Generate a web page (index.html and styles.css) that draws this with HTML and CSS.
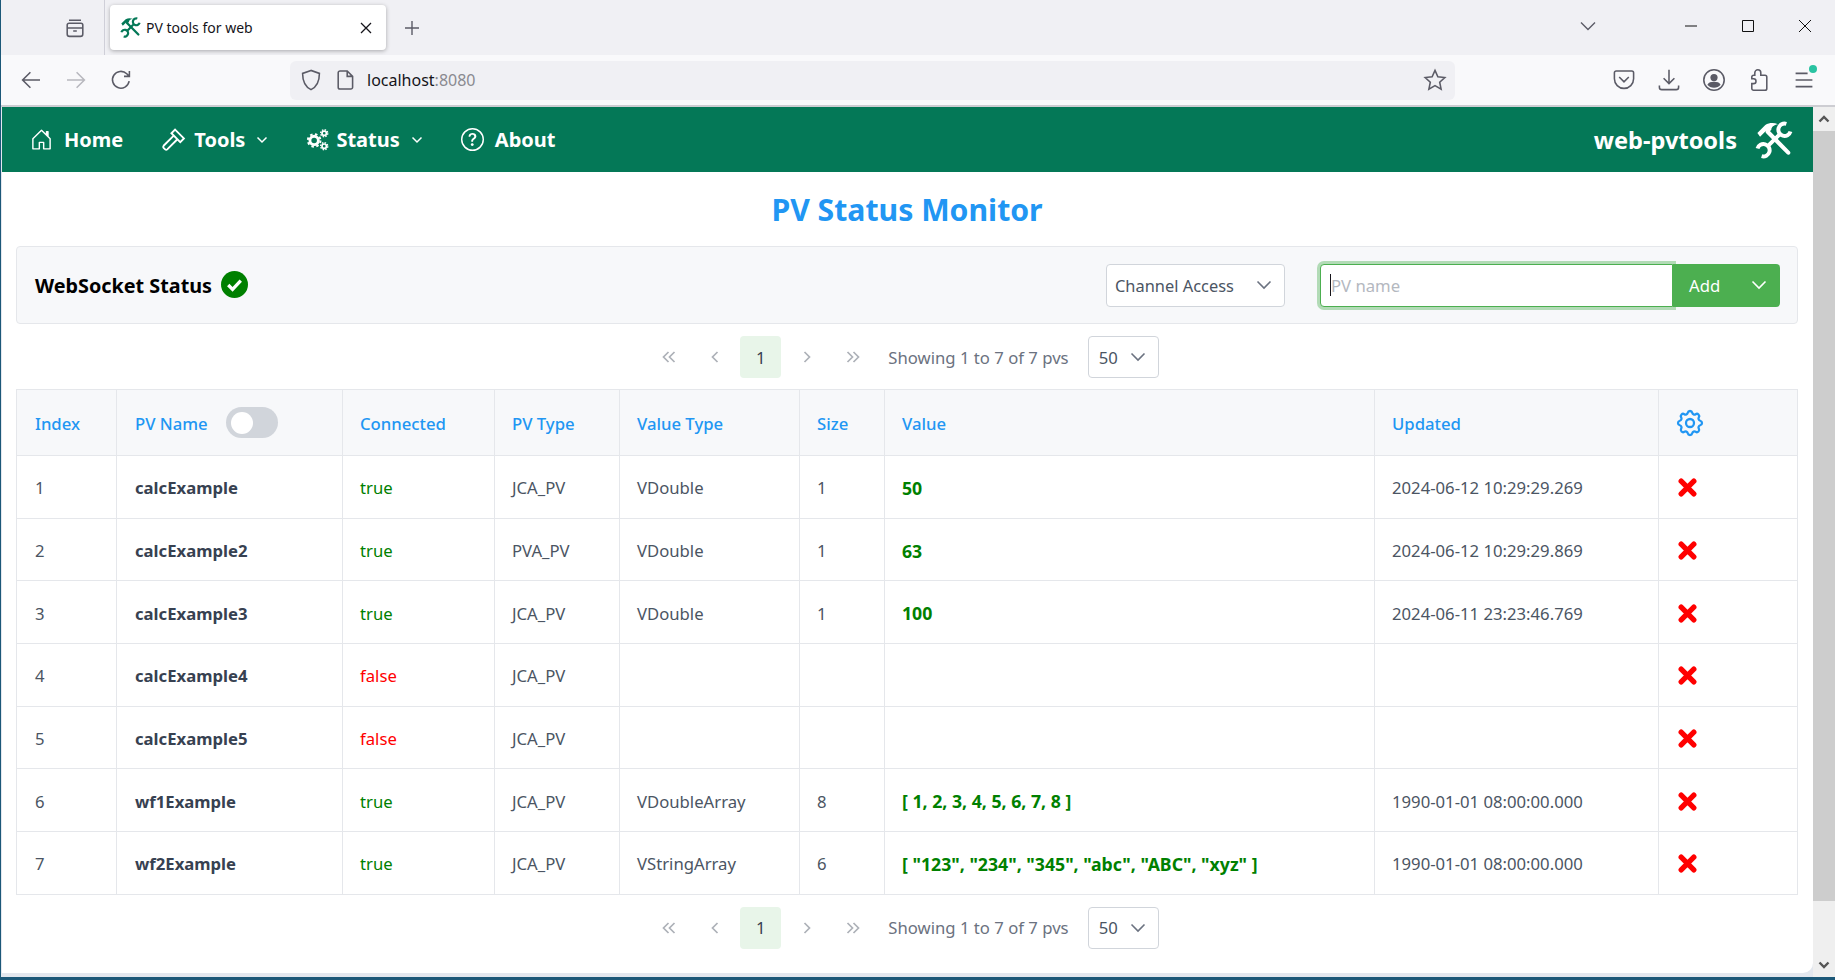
FILE: index.html
```html
<!DOCTYPE html>
<html lang="en">

<head>
    <meta charset="UTF-8">
    <title>PV tools for web</title>
    <link rel="stylesheet" href="styles.css">
</head>

<body>
    <svg class="defs" width="0" height="0">
        <symbol id="tools" viewBox="0 0 24 24">
            <path d="M1.500 7.500 6.500 2.500C9 1 12 1 14.500 2 11.800 2.500 10.300 3.800 10.300 5.500L8.400 7.600 7 6.200 3.200 10Z" fill="currentColor" />
            <path d="M8 6.800 21 20" stroke="currentColor" stroke-width="2.600" stroke-linecap="round" fill="none" />
            <path d="M19.800 1.800A3.900 3.900 0 1 0 22.400 6.600M15.600 8.400 8.400 15.600M4.200 22.200A3.900 3.900 0 1 0 1.600 17.400" stroke="currentColor" stroke-width="2.500" fill="none" />
        </symbol>
    </svg>

    <div class="tabbar">
        <div class="tab-side">
            <svg class="ff-icon" viewBox="0 0 20 20"><path d="M5 3.500h10M3.500 7.500a1.500 1.500 0 0 1 1.500-1.500h10a1.500 1.500 0 0 1 1.500 1.500v7.500a2 2 0 0 1-2 2h-9a2 2 0 0 1-2-2ZM3.500 10h13M8.500 12.500h3" /></svg>
        </div>
        <div class="tab">
            <svg class="tab-logo"><use href="#tools" /></svg>
            <span class="tab-title">PV tools for web</span>
            <svg class="tab-close" viewBox="0 0 12 12"><path d="M1 1l10 10M11 1 1 11" /></svg>
        </div>
        <svg class="tab-new" viewBox="0 0 16 16"><path d="M8 1v14M1 8h14" /></svg>
        <div class="win-controls">
            <svg class="tab-list" viewBox="0 0 16 10"><path d="M1 1.500 8 8.500l7-7" /></svg>
            <svg class="win-btn win-min" viewBox="0 0 12 12"><path d="M0 6h12" /></svg>
            <svg class="win-btn win-max" viewBox="0 0 12 12"><path d="M.5.500h11v11H.5Z" /></svg>
            <svg class="win-btn win-close" viewBox="0 0 12 12"><path d="M0 0l12 12M12 0 0 12" /></svg>
        </div>
    </div>

    <div class="toolbar">
        <div class="toolbar-nav">
            <svg class="ff-icon" viewBox="0 0 20 20"><path d="M17.500 10H3M9.500 3.500 3 10l6.500 6.500" /></svg>
            <svg class="ff-icon muted" viewBox="0 0 20 20"><path d="M2.500 10H17M10.500 3.500 17 10l-6.500 6.500" /></svg>
            <svg class="ff-icon" viewBox="0 0 20 20"><path d="M16.800 11a7 7 0 1 1-2-6.200L17 7M17 2.500V7h-4.500" /></svg>
        </div>
        <div class="urlbar">
            <svg class="ff-icon" viewBox="0 0 20 20"><path d="M10 2 3 4.500c0 6.500 2 11 7 13.500 5-2.500 7-7 7-13.500Z" /></svg>
            <svg class="ff-icon page-icon" viewBox="0 0 20 20"><path d="M5 2.500h6l4.500 4.500v9a1.500 1.500 0 0 1-1.500 1.500H5A1.500 1.500 0 0 1 3.500 16V4A1.500 1.500 0 0 1 5 2.500ZM11 2.500V7h4.500" /></svg>
            <span class="url-text">localhost<span class="url-port">:8080</span></span>
            <svg class="ff-icon star-icon" viewBox="0 0 20 20"><path d="M10 2l2.400 5.300 5.800.7-4.300 3.900 1.200 5.700L10 14.700l-5.100 2.900 1.200-5.700L1.800 8l5.800-.7Z" /></svg>
        </div>
        <div class="toolbar-right">
            <svg class="ff-icon" viewBox="0 0 20 20"><path d="M3.500 2.500h13A1.500 1.500 0 0 1 18 4v5a8 8 0 0 1-16 0V4a1.500 1.500 0 0 1 1.500-1.500ZM6 7.500l4 4 4-4" /></svg>
            <svg class="ff-icon" viewBox="0 0 20 20"><path d="M10 1.500v11.500M5.500 8.500 10 13l4.500-4.500M2 14.500v1.500a2 2 0 0 0 2 2h12a2 2 0 0 0 2-2v-1.500" /></svg>
            <svg class="ff-icon" viewBox="0 0 20 20"><circle cx="10" cy="10" r="8.500" /><circle class="solid" cx="10" cy="8" r="3" /><path class="solid" d="M4.500 14c1-2 3-2.500 5.500-2.500s4.500.5 5.500 2.500c-1.200 1.500-3.300 2.500-5.500 2.500S5.700 15.500 4.500 14Z" /></svg>
            <svg class="ff-icon" viewBox="0 0 20 20"><path d="M9 1.500a2.500 2.500 0 0 1 2.500 2.500v2H15a1.500 1.500 0 0 1 1.500 1.500V17a1.500 1.500 0 0 1-1.500 1.500H5.500A1.500 1.500 0 0 1 4 17v-4h1.500a2 2 0 0 0 0-4H4V7.500A1.500 1.500 0 0 1 5.500 6h1V4A2.500 2.500 0 0 1 9 1.500Z" /></svg>
            <div class="menu-btn">
                <svg class="ff-icon" viewBox="0 0 20 20"><path d="M3 4.500h10M3 10h14M3 15.500h14" /></svg>
                <span class="menu-dot"></span>
            </div>
        </div>
    </div>

    <div class="viewport">
        <div class="page">
            <nav class="navbar">
                <a class="nav-item">
                    <svg class="nav-icon" viewBox="0 0 16 16"><path d="M8.354 1.146a.5.5 0 0 0-.708 0l-6 6A.5.5 0 0 0 1.5 7.5v7a.5.5 0 0 0 .5.5h4.500a.5.5 0 0 0 .5-.5v-4h2v4a.5.5 0 0 0 .5.5H14a.5.5 0 0 0 .5-.5v-7a.5.5 0 0 0-.146-.354L13 5.793V2.500a.5.5 0 0 0-.5-.5h-1a.5.5 0 0 0-.5.5v1.293L8.354 1.146zM2.500 14V7.707l5.500-5.500 5.500 5.500V14H10v-4a.5.5 0 0 0-.5-.5h-3a.5.5 0 0 0-.5.5v4H2.500z" /></svg>
                    Home
                </a>
                <a class="nav-item">
                    <svg class="nav-icon hammer" viewBox="0 0 24 24"><path class="line-icon" d="M13.500 2.500 22 11l-3.500 3.500L10 6ZM12 8.500 2.500 18a1.500 1.500 0 0 0 0 2l1.500 1.500a1.500 1.500 0 0 0 2 0l9.500-9.500" /></svg>
                    Tools
                    <svg class="nav-caret" viewBox="0 0 12 8"><path d="M1.500 1.500 6 6l4.500-4.500" /></svg>
                </a>
                <a class="nav-item">
                    <svg class="nav-icon gears" viewBox="0 0 24 24"><circle class="gear" cx="8.500" cy="13" r="4.400" /><circle class="gear-teeth" cx="8.500" cy="13" r="6.600" /><circle class="gear small" cx="19" cy="5.500" r="2.300" /><circle class="gear-teeth small" cx="19" cy="5.500" r="3.700" /><circle class="gear small" cx="19" cy="19" r="2.300" /><circle class="gear-teeth small" cx="19" cy="19" r="3.700" /></svg>
                    Status
                    <svg class="nav-caret" viewBox="0 0 12 8"><path d="M1.500 1.500 6 6l4.500-4.500" /></svg>
                </a>
                <a class="nav-item">
                    <svg class="nav-icon" viewBox="0 0 16 16"><path d="M8 15A7 7 0 1 1 8 1a7 7 0 0 1 0 14zm0 1A8 8 0 1 0 8 0a8 8 0 0 0 0 16z" /><path d="M5.255 5.786a.237.237 0 0 0 .241.247h.825c.138 0 .248-.113.266-.25.09-.656.54-1.134 1.342-1.134.686 0 1.314.343 1.314 1.168 0 .635-.374.927-.965 1.371-.673.489-1.206 1.06-1.168 1.987l.003.217a.25.25 0 0 0 .25.246h.811a.25.25 0 0 0 .25-.25v-.105c0-.718.273-.927 1.01-1.486.609-.463 1.244-.977 1.244-2.056 0-1.511-1.276-2.241-2.673-2.241-1.267 0-2.655.59-2.75 2.286zm1.557 5.763c0 .533.425.927 1.01.927.609 0 1.028-.394 1.028-.927 0-.552-.42-.94-1.029-.94-.584 0-1.009.388-1.009.94z" /></svg>
                    About
                </a>
                <div class="brand">
                    <span>web-pvtools</span>
                    <svg class="brand-logo"><use href="#tools" /></svg>
                </div>
            </nav>

            <main class="content">
                <h1 class="page-title">PV Status Monitor</h1>

                <div class="status-panel">
                    <div class="ws-status">
                        <span>WebSocket Status</span>
                        <svg class="ws-check" viewBox="0 0 28 28"><circle cx="14" cy="14" r="14" /><path d="M7.500 14.500 12 19l8.500-9" /></svg>
                    </div>
                    <div class="pv-form">
                        <div class="select protocol-select">
                            <span>Channel Access</span>
                            <svg class="select-caret" viewBox="0 0 16 10"><path d="M1.500 1.500 8 8l6.500-6.500" /></svg>
                        </div>
                        <div class="add-group">
                            <div class="pv-input"><span class="caret-bar"></span>PV name</div>
                            <div class="add-btn">
                                <span>Add</span>
                                <svg viewBox="0 0 16 10"><path d="M1.500 1.500 8 8l6.500-6.500" /></svg>
                            </div>
                        </div>
                    </div>
                </div>

                <div class="pager">
                    <span class="page-btn"><svg viewBox="0 0 16 12"><path d="M7.500 1 2.500 6l5 5M13.500 1l-5 5 5 5" /></svg></span>
                    <span class="page-btn"><svg viewBox="0 0 16 12"><path d="M10.500 1l-5 5 5 5" /></svg></span>
                    <span class="page-btn active">1</span>
                    <span class="page-btn"><svg viewBox="0 0 16 12"><path d="M5.500 1l5 5-5 5" /></svg></span>
                    <span class="page-btn"><svg viewBox="0 0 16 12"><path d="M2.500 1l5 5-5 5M8.500 1l5 5-5 5" /></svg></span>
                    <span class="page-info">Showing 1 to 7 of 7 pvs</span>
                    <div class="select size-select">
                        <span>50</span>
                        <svg class="select-caret" viewBox="0 0 16 10"><path d="M1.500 1.500 8 8l6.500-6.500" /></svg>
                    </div>
                </div>

                <table class="pv-table">
                    <colgroup>
                        <col class="col-index">
                        <col class="col-name">
                        <col class="col-conn">
                        <col class="col-type">
                        <col class="col-vtype">
                        <col class="col-size">
                        <col class="col-value">
                        <col class="col-updated">
                        <col class="col-action">
                    </colgroup>
                    <thead>
                        <tr>
                            <th>Index</th>
                            <th>
                                <div class="name-head">PV Name <span class="toggle"><span class="toggle-knob"></span></span></div>
                            </th>
                            <th>Connected</th>
                            <th>PV Type</th>
                            <th>Value Type</th>
                            <th>Size</th>
                            <th>Value</th>
                            <th>Updated</th>
                            <th>
                                <svg class="settings-icon" viewBox="0 0 24 24"><path d="M10.325 4.317c.426-1.756 2.924-1.756 3.35 0a1.724 1.724 0 002.573 1.066c1.543-.94 3.31.826 2.37 2.37a1.724 1.724 0 001.065 2.572c1.756.426 1.756 2.924 0 3.35a1.724 1.724 0 00-1.066 2.573c.94 1.543-.826 3.31-2.37 2.37a1.724 1.724 0 00-2.572 1.065c-.426 1.756-2.924 1.756-3.35 0a1.724 1.724 0 00-2.573-1.066c-1.543.94-3.31-.826-2.37-2.37a1.724 1.724 0 00-1.065-2.572c-1.756-.426-1.756-2.924 0-3.35a1.724 1.724 0 001.066-2.573c-.94-1.543.826-3.31 2.37-2.37.996.608 2.296.07 2.572-1.065z" /><path d="M15 12a3 3 0 11-6 0 3 3 0 016 0z" /></svg>
                            </th>
                        </tr>
                    </thead>
                    <tbody>
                        <tr>
                            <td>1</td>
                            <td class="pv-name">calcExample</td>
                            <td class="ok">true</td>
                            <td>JCA_PV</td>
                            <td>VDouble</td>
                            <td>1</td>
                            <td class="pv-value">50</td>
                            <td>2024-06-12 10:29:29.269</td>
                            <td><svg class="del-icon" viewBox="0 0 18 18"><path d="M3 3l12 12M15 3 3 15" /></svg></td>
                        </tr>
                        <tr>
                            <td>2</td>
                            <td class="pv-name">calcExample2</td>
                            <td class="ok">true</td>
                            <td>PVA_PV</td>
                            <td>VDouble</td>
                            <td>1</td>
                            <td class="pv-value">63</td>
                            <td>2024-06-12 10:29:29.869</td>
                            <td><svg class="del-icon" viewBox="0 0 18 18"><path d="M3 3l12 12M15 3 3 15" /></svg></td>
                        </tr>
                        <tr>
                            <td>3</td>
                            <td class="pv-name">calcExample3</td>
                            <td class="ok">true</td>
                            <td>JCA_PV</td>
                            <td>VDouble</td>
                            <td>1</td>
                            <td class="pv-value">100</td>
                            <td>2024-06-11 23:23:46.769</td>
                            <td><svg class="del-icon" viewBox="0 0 18 18"><path d="M3 3l12 12M15 3 3 15" /></svg></td>
                        </tr>
                        <tr>
                            <td>4</td>
                            <td class="pv-name">calcExample4</td>
                            <td class="bad">false</td>
                            <td>JCA_PV</td>
                            <td></td>
                            <td></td>
                            <td></td>
                            <td></td>
                            <td><svg class="del-icon" viewBox="0 0 18 18"><path d="M3 3l12 12M15 3 3 15" /></svg></td>
                        </tr>
                        <tr>
                            <td>5</td>
                            <td class="pv-name">calcExample5</td>
                            <td class="bad">false</td>
                            <td>JCA_PV</td>
                            <td></td>
                            <td></td>
                            <td></td>
                            <td></td>
                            <td><svg class="del-icon" viewBox="0 0 18 18"><path d="M3 3l12 12M15 3 3 15" /></svg></td>
                        </tr>
                        <tr>
                            <td>6</td>
                            <td class="pv-name">wf1Example</td>
                            <td class="ok">true</td>
                            <td>JCA_PV</td>
                            <td>VDoubleArray</td>
                            <td>8</td>
                            <td class="pv-value">[ 1, 2, 3, 4, 5, 6, 7, 8 ]</td>
                            <td>1990-01-01 08:00:00.000</td>
                            <td><svg class="del-icon" viewBox="0 0 18 18"><path d="M3 3l12 12M15 3 3 15" /></svg></td>
                        </tr>
                        <tr>
                            <td>7</td>
                            <td class="pv-name">wf2Example</td>
                            <td class="ok">true</td>
                            <td>JCA_PV</td>
                            <td>VStringArray</td>
                            <td>6</td>
                            <td class="pv-value">[ "123", "234", "345", "abc", "ABC", "xyz" ]</td>
                            <td>1990-01-01 08:00:00.000</td>
                            <td><svg class="del-icon" viewBox="0 0 18 18"><path d="M3 3l12 12M15 3 3 15" /></svg></td>
                        </tr>
                    </tbody>
                </table>

                <div class="pager pager-bottom">
                    <span class="page-btn"><svg viewBox="0 0 16 12"><path d="M7.500 1 2.500 6l5 5M13.500 1l-5 5 5 5" /></svg></span>
                    <span class="page-btn"><svg viewBox="0 0 16 12"><path d="M10.500 1l-5 5 5 5" /></svg></span>
                    <span class="page-btn active">1</span>
                    <span class="page-btn"><svg viewBox="0 0 16 12"><path d="M5.500 1l5 5-5 5" /></svg></span>
                    <span class="page-btn"><svg viewBox="0 0 16 12"><path d="M2.500 1l5 5-5 5M8.500 1l5 5-5 5" /></svg></span>
                    <span class="page-info">Showing 1 to 7 of 7 pvs</span>
                    <div class="select size-select">
                        <span>50</span>
                        <svg class="select-caret" viewBox="0 0 16 10"><path d="M1.500 1.500 8 8l6.500-6.500" /></svg>
                    </div>
                </div>
            </main>
        </div>

        <div class="scrollbar">
            <svg class="scroll-arrow" viewBox="0 0 12 8"><path d="M1.500 6.500 6 2l4.500 4.500" /></svg>
            <div class="scroll-thumb"></div>
            <div class="scroll-track"></div>
            <svg class="scroll-arrow" viewBox="0 0 12 8"><path d="M1.500 1.500 6 6l4.500-4.500" /></svg>
        </div>
    </div>
</body>

</html>
```

FILE: styles.css
```css
:root {
    --green-dark: #047857;
    --green: #4caf50;
    --blue: #2196f3;
    --border-color: #e5e7eb;
    --head-bg: #f7f8fa;
    --text: #4b5563;
    --frame: #1c5878;
}

* {
    margin: 0;
    padding: 0;
    box-sizing: border-box;
}

html,
body {
    height: 980px;
    overflow: hidden;
}

body {
    width: 1835px;
    display: flex;
    flex-direction: column;
    font-family: 'Noto Sans', 'Open Sans', sans-serif;
    font-size: 16.7px;
    color: var(--text);
    background: var(--frame);
    padding: 0 0 3px 1px;
}

.defs {
    position: absolute;
}

/* browser chrome */
.tabbar {
    height: 55px;
    flex: none;
    display: flex;
    align-items: flex-start;
    background: #f0f0f4;
}

.ff-icon {
    width: 24px;
    height: 24px;
    flex: none;
    fill: none;
    stroke: #5b5b66;
    stroke-width: 1.3;
}

.ff-icon .solid {
    fill: #5b5b66;
    stroke: none;
}

.ff-icon.muted {
    stroke: #b8b8be;
}

.tab-side {
    width: 104px;
    height: 55px;
    display: flex;
    align-items: center;
    justify-content: flex-end;
    padding-right: 17px;
    border-right: 1px solid #cfcfd8;
}

.tab {
    width: 276px;
    height: 45px;
    margin: 5px 0 0 5px;
    padding: 0 14px 0 10px;
    display: flex;
    align-items: center;
    background: #fff;
    border-radius: 4px;
    box-shadow: 0 1px 4px rgba(0, 0, 0, 0.3);
}

.tab-logo {
    width: 21px;
    height: 21px;
    color: var(--green-dark);
    flex: none;
}

.tab-title {
    flex: 1;
    margin-left: 5px;
    font-size: 14px;
    color: #15141a;
}

.tab-close {
    width: 12px;
    height: 12px;
    fill: none;
    stroke: #15141a;
    stroke-width: 1.3;
}

.tab-new {
    width: 16px;
    height: 16px;
    margin: 20px 0 0 18px;
    fill: none;
    stroke: #5b5b66;
    stroke-width: 1.4;
}

.win-controls {
    margin-left: auto;
    display: flex;
    align-items: center;
    height: 52px;
    padding-right: 24px;
}

.tab-list {
    width: 16px;
    height: 10px;
    margin-right: 89px;
    fill: none;
    stroke: #5b5b66;
    stroke-width: 1.4;
}

.win-btn {
    width: 12px;
    height: 12px;
    fill: none;
    stroke: #111;
    stroke-width: 1;
}

.win-max {
    margin: 0 45px;
}

.toolbar {
    height: 52px;
    flex: none;
    display: flex;
    align-items: center;
    background: #f9f9fb;
    border-bottom: 2px solid #cdcdd2;
}

.toolbar-nav {
    width: 289px;
    padding-left: 18px;
    display: flex;
    gap: 21px;
}

.urlbar {
    width: 1165px;
    height: 39px;
    display: flex;
    align-items: center;
    padding: 0 8px 0 9px;
    background: #f0f0f4;
    border-radius: 6px;
}

.page-icon {
    margin-left: 11px;
}

.url-text {
    margin-left: 9px;
    font-size: 16px;
    color: #15141a;
}

.url-port {
    color: #8a8a90;
}

.star-icon {
    margin-left: auto;
}

.toolbar-right {
    margin-left: auto;
    padding-right: 19px;
    display: flex;
    gap: 21px;
}

.menu-btn {
    position: relative;
    height: 24px;
}

.menu-dot {
    position: absolute;
    top: -3px;
    right: -1px;
    width: 8px;
    height: 8px;
    border-radius: 50%;
    background: #2ac3a2;
}

/* page area */
.viewport {
    flex: 1;
    min-height: 0;
    display: flex;
    background: #e3e7ee;
}

.page {
    flex: 1;
    min-width: 0;
    margin-left: 1px;
    margin-bottom: 4px;
    background: #fff;
    border-radius: 0 0 10px 0;
    overflow: hidden;
}

.navbar {
    height: 65px;
    display: flex;
    align-items: center;
    gap: 38px;
    padding: 0 19px 0 28px;
    background: var(--green-dark);
    border-bottom: 0;
}

.nav-item {
    display: flex;
    align-items: center;
    gap: 11px;
    color: #fff;
    font-size: 20px;
    font-weight: 700;
}

.nav-icon {
    width: 23px;
    height: 23px;
    fill: #fff;
}

.nav-icon.hammer {
    width: 25px;
    height: 25px;
    margin-right: -3px;
}

.nav-icon.gears {
    margin-right: -4px;
}

.line-icon {
    fill: none;
    stroke: #fff;
    stroke-width: 1.8;
}

.gear {
    fill: none;
    stroke: #fff;
    stroke-width: 3;
}

.gear-teeth {
    fill: none;
    stroke: #fff;
    stroke-width: 2;
    stroke-dasharray: 2.6 2.6;
}

.gear.small {
    stroke-width: 1.8;
}

.gear-teeth.small {
    stroke-width: 1.4;
    stroke-dasharray: 1.6 1.3;
}

.nav-caret {
    width: 12px;
    height: 8px;
    margin-left: 0;
    fill: none;
    stroke: #fff;
    stroke-width: 1.5;
}

.brand {
    margin-left: auto;
    display: flex;
    align-items: center;
    gap: 18px;
    color: #fff;
    font-size: 23.6px;
    font-weight: 700;
}

.brand-logo {
    width: 38px;
    height: 38px;
    margin-right: 1px;
    color: #fff;
}

.content {
    padding: 0 15px 0 14px;
}

.page-title {
    height: 74px;
    line-height: 76px;
    text-align: center;
    font-size: 30.2px;
    font-weight: 700;
    color: var(--blue);
}

.status-panel {
    height: 78px;
    display: flex;
    align-items: center;
    justify-content: space-between;
    padding: 0 17px 0 18px;
    background: var(--head-bg);
    border: 1px solid var(--border-color);
    border-radius: 4px;
}

.ws-status {
    display: flex;
    align-items: center;
    gap: 9px;
    color: #000;
    font-size: 19.8px;
    font-weight: 700;
}

.ws-check {
    width: 27px;
    height: 27px;
    margin-top: -2px;
}

.ws-check circle {
    fill: #008000;
}

.ws-check path {
    fill: none;
    stroke: #fff;
    stroke-width: 3.4;
}

.pv-form {
    display: flex;
    align-items: center;
    gap: 35px;
}

.select {
    display: flex;
    align-items: center;
    justify-content: space-between;
    background: #fff;
    border: 1px solid #d1d5db;
    border-radius: 4px;
    color: var(--text);
}

.protocol-select {
    width: 179px;
    height: 43px;
    padding: 0 12px 0 8px;
    font-size: 16.4px;
}

.size-select {
    width: 71px;
    height: 42px;
    padding: 0 12px 0 10px;
    margin-left: 14px;
}

.select-caret {
    width: 16px;
    height: 10px;
    fill: none;
    stroke: #6b7280;
    stroke-width: 1.6;
}

.add-group {
    display: flex;
}

.pv-input {
    width: 353px;
    height: 43px;
    display: flex;
    align-items: center;
    padding-left: 9px;
    color: #b4b8bf;
    background: #fff;
    border: 1px solid var(--green);
    border-radius: 4px 0 0 4px;
    box-shadow: 0 0 0 3px rgba(76, 175, 80, 0.4);
}

.caret-bar {
    width: 1px;
    height: 22px;
    background: #15141a;
}

.add-btn {
    width: 107px;
    height: 43px;
    display: flex;
    align-items: center;
    justify-content: space-between;
    padding: 0 13px 0 16px;
    background: var(--green);
    color: #fff;
    border-radius: 0 4px 4px 0;
    position: relative;
}

.add-btn svg {
    width: 16px;
    height: 10px;
    fill: none;
    stroke: #fff;
    stroke-width: 1.6;
}

.pager {
    display: flex;
    align-items: center;
    justify-content: center;
    gap: 5px;
    height: 42px;
    margin-top: 12px;
    margin-left: -7px;
}

.page-btn {
    width: 41px;
    height: 42px;
    display: flex;
    align-items: center;
    justify-content: center;
    border-radius: 4px;
    color: #374151;
}

.page-btn svg {
    width: 16px;
    height: 12px;
    fill: none;
    stroke: #adb1b8;
    stroke-width: 1.7;
}

.page-btn.active {
    background: #e8f5e9;
}

.page-info {
    margin-left: 10px;
    color: #6b7280;
}

.pv-table {
    width: 1781px;
    margin-top: 11px;
    border-collapse: collapse;
    table-layout: fixed;
}

.col-index { width: 100px; }
.col-name { width: 226px; }
.col-conn { width: 152px; }
.col-type { width: 125px; }
.col-vtype { width: 180px; }
.col-size { width: 85px; }
.col-value { width: 490px; }
.col-updated { width: 284px; }
.col-action { width: 139px; }

.pv-table th,
.pv-table td {
    padding: 2px 17px 0;
    border: 1px solid var(--border-color);
    text-align: left;
    white-space: nowrap;
}

.pv-table th:nth-child(-n+2),
.pv-table td:nth-child(-n+2) {
    padding-left: 18px;
}

.pv-table th {
    height: 66px;
    background: var(--head-bg);
    color: var(--blue);
    font-weight: 500;
}

.pv-table td {
    height: 62.7px;
}

.name-head {
    display: flex;
    align-items: center;
    gap: 18px;
}

.toggle {
    width: 52px;
    height: 31px;
    padding: 5px;
    margin-top: -2px;
    border-radius: 16px;
    background: #d1d5db;
}

.toggle-knob {
    display: block;
    width: 22px;
    height: 22px;
    border-radius: 50%;
    background: #fff;
}

.settings-icon {
    display: block;
    width: 32px;
    height: 32px;
    margin: -2px 0 0 -2px;
    fill: none;
    stroke: var(--blue);
    stroke-width: 1.7;
}

.pv-name {
    font-weight: 700;
    color: #374151;
}

.ok {
    color: #008000;
}

.bad {
    color: #ff0000;
}

.pv-value {
    font-weight: 700;
    color: #008000;
    font-size: 17.7px;
}

.del-icon {
    display: block;
    width: 19px;
    height: 19px;
    margin-left: 2px;
    fill: none;
    stroke: #ff0000;
    stroke-width: 5;
    stroke-linecap: round;
}

/* scrollbar */
.scrollbar {
    width: 22px;
    flex: none;
    display: flex;
    flex-direction: column;
    align-items: center;
    background: #efefef;
}

.scroll-arrow {
    width: 12px;
    height: 8px;
    flex: none;
    margin: 8px 0;
    fill: none;
    stroke: #555;
    stroke-width: 2.4;
}

.scroll-thumb {
    width: 100%;
    height: 770px;
    flex: none;
    background: #cdcdcd;
}

.scroll-track {
    flex: 1;
}
```
